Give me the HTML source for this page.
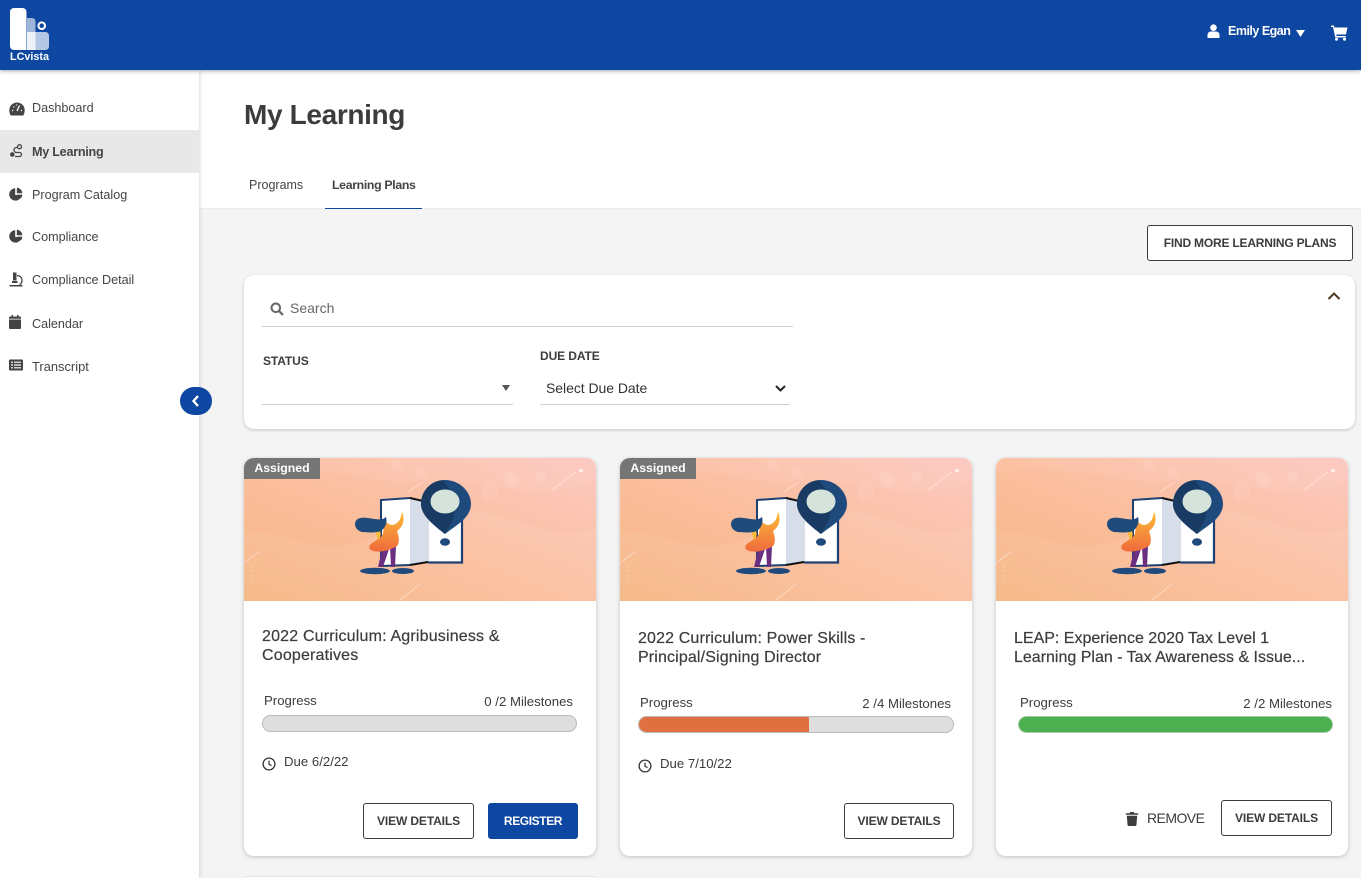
<!DOCTYPE html>
<html lang="en"><head><meta charset="utf-8"><title>My Learning</title>
<style>
*{box-sizing:border-box}
html,body{margin:0;padding:0;width:1361px;height:878px;overflow:hidden}
body{position:relative;background:#f4f4f4;font-family:"Liberation Sans",sans-serif;color:#3c3c3c}
.a{position:absolute;white-space:nowrap}
#hdr{left:0;top:0;width:1361px;height:70px;background:#0d47a1;box-shadow:0 1px 4px rgba(0,0,0,.35);z-index:5}
#side{left:0;top:70px;width:199px;height:808px;background:#fff;box-shadow:1px 0 4px rgba(0,0,0,.14);z-index:3}
#top{left:199px;top:70px;width:1162px;height:139px;background:#fff;border-bottom:1px solid #eee}
.nav{left:32px;font-size:12.6px;line-height:16px;color:#444}
.card{width:352px;height:398px;top:458px;background:#fff;border-radius:10px;box-shadow:0 1px 4px rgba(0,0,0,.22);overflow:hidden}
.btn{border:1px solid #3c3c3c;border-radius:3px;background:#fff;font-size:12px;font-weight:bold;color:#3c3c3c;display:flex;align-items:center;justify-content:center;letter-spacing:-.12px}
.title{font-size:16px;line-height:19px;color:#3c3c3c;font-weight:400;letter-spacing:.18px;-webkit-text-stroke:.2px #3c3c3c}
.sm{font-size:13.2px;line-height:15px;color:#3c3c3c}
.bar{height:17px;border-radius:9px;background:#dedede;border:1px solid #bbb;overflow:hidden}
.tag{left:0;top:0;width:76px;height:21px;background:#757575;color:#fff;font-size:12.3px;font-weight:bold;text-align:center;line-height:20px}
</style></head><body>
<svg width="0" height="0" style="position:absolute">
<defs>
<linearGradient id="g" x1="0" y1="1" x2="1" y2="0"><stop offset="0" stop-color="#f6b581"/><stop offset=".5" stop-color="#fbbf9f"/><stop offset="1" stop-color="#fcc8c0"/></linearGradient>
<linearGradient id="f" x1="0" y1="0" x2="0" y2="1"><stop offset="0" stop-color="#fbbb38"/><stop offset="1" stop-color="#ef6a3c"/></linearGradient>
</defs>
<symbol id="art" viewBox="0 0 352 143">
<rect width="352" height="143" fill="url(#g)"/>
<path d="M0 75C40 72 60 92 100 88S170 50 220 52 300 85 352 70V143H0Z" fill="#fff" opacity=".07"/>
<path d="M0 16C70 0 130 30 190 24S290 50 352 22V0H0Z" fill="#fff" opacity=".06"/>
<circle cx="267" cy="22" r="8" fill="#fff" opacity=".12"/><circle cx="246" cy="34" r="9" fill="#fff" opacity=".08"/><circle cx="297" cy="19" r="5" fill="#fff" opacity=".1"/><circle cx="177" cy="15" r="6" fill="#fff" opacity=".08"/><circle cx="153" cy="7" r="6" fill="#fff" opacity=".08"/>
<path d="M308 32 332 14M0 105 15 94M155 143 176 126M163 35 177 25" stroke="#fff" stroke-width="1" opacity=".4"/>
<rect x="335" y="11" width="4" height="3" fill="#fff" opacity=".6"/>
<path d="M8 109v1M8 113v1M8 117v1M8 121v1M8 124v1" stroke="#fff" stroke-width="2" opacity=".3"/>
<g style="filter:blur(.3px)">
<path d="M137 42 166 40V107L137 108Z" fill="#fff"/>
<path d="M166 40 185 45V105L166 107Z" fill="#d7deea"/>
<path d="M185 45H218V105H185Z" fill="#fff"/>
<path d="M137 108V42L166 40" fill="none" stroke="#1e4070" stroke-width="2"/>
<path d="M137 108 166 107" fill="none" stroke="#1e4070" stroke-width="2"/>
<path d="M166 40 179 43M166 107 184 104" stroke="#111" stroke-width="2" fill="none"/>
<path d="M184 104.500H218V60" stroke="#1e4070" stroke-width="2.200" fill="none"/>
<path d="M201 22C187 22 177 33 177 46 177 58 191 68 201 76 211 68 227 60 227 46 227 33 215 22 201 22Z" fill="#1f4a7c"/>
<path d="M201 22C187 22 177 33 177 46 177 58 191 68 201 76L206 68C213 58 212 34 198 22Z" fill="#193a63"/>
<ellipse cx="201" cy="43.500" rx="14.500" ry="12" fill="#d5e3da"/>
<ellipse cx="201" cy="84" rx="5" ry="3.800" fill="#1f4a7c"/>
<ellipse cx="131" cy="113" rx="15" ry="3.200" fill="#1f4a7c"/><ellipse cx="159" cy="113" rx="11" ry="3" fill="#1f4a7c"/>
<path d="M139 88H146L139 109H134ZM146 88H152L151 109H147Z" fill="#6b2f80"/>
<path d="M131 72C132 76 133 80 134 83L137 76 135 71Z" fill="#fbbb38"/>
<path d="M141 63C146 68 150 68 154 64 157 61 157 57 158 54 161 60 160 68 153 73 155 79 156 84 153 88 147 92 134 96 127 92 124 90 125 87 128 85 133 82 138 79 139 75 140 71 139 67 141 63Z" fill="url(#f)"/>
<path d="M111 66C111 60 118 59 124 60 131 61 138 63 142 59 144 66 140 73 133 74 127 75 122 74 118 74 114 73 111 70 111 66Z" fill="#1f4a7c"/>
</g>
</symbol>
<symbol id="clock" viewBox="0 0 14 14"><circle cx="7" cy="7" r="5.900" fill="none" stroke="#333" stroke-width="1.300"/><path d="M7 3.600V7.400L9.600 8.600" fill="none" stroke="#333" stroke-width="1.200"/></symbol>
<symbol id="pie" viewBox="0 0 14 14"><path d="M6.200 1.200A6.200 6.200 0 1 0 12.600 8H6.200Z" fill="#444"/><path d="M7.800 0.600A6 6 0 0 1 13.400 6.200H7.800Z" fill="#444"/><path d="M8.400 7.600H13.400A6 6 0 0 1 11.800 11.500Z" fill="#444"/></symbol>
</svg>

<div id="hdr" class="a">
<svg class="a" style="left:0;top:0" width="60" height="56" viewBox="0 0 60 56">
<path d="M27 18H32A3.500 3.500 0 0 1 35.500 21.500V32H27Z" fill="#fff" opacity=".6"/>
<path d="M35.500 32H45.500A3.500 3.500 0 0 1 49 35.500V46.500A3.500 3.500 0 0 1 45.500 50H35.500Z" fill="#fff" opacity=".7"/>
<path d="M27 32H35.500V50H27Z" fill="#fff" opacity=".93"/>
<path d="M14 8H22.500A4 4 0 0 1 26.500 12V50H14A4 4 0 0 1 10 46V12A4 4 0 0 1 14 8Z" fill="#fff"/>
<circle cx="41.700" cy="25.700" r="3.300" fill="none" stroke="#fff" stroke-width="2"/>
</svg>
<div class="a" style="left:10px;top:51px;font-size:10.800px;font-weight:bold;color:#fff;line-height:13px">LCvista</div>
<svg class="a" style="left:1207px;top:24px" width="13" height="14" viewBox="0 0 13 14"><circle cx="6.500" cy="3.700" r="3.300" fill="#fff"/><path d="M0.500 14V11C.5 8.500 2.500 7.500 4 7.500H9C10.500 7.500 12.500 8.500 12.500 11V14Z" fill="#fff"/></svg>
<div class="a" style="left:1228px;top:23px;font-size:12.500px;font-weight:bold;color:#fff;line-height:16px;letter-spacing:-.5px">Emily Egan</div>
<svg class="a" style="left:1296px;top:30px" width="9" height="7" viewBox="0 0 9 7"><path d="M0 0H9L4.500 7Z" fill="#fff"/></svg>
<svg class="a" style="left:1331px;top:25px" width="17" height="16" viewBox="0 0 17 16"><path d="M0 .5H3L3.500 2.500H16.500L15 9.500H5.300L5.600 11H14.800V12.500H4.300L2 2H0Z" fill="#fff"/><circle cx="5.500" cy="14.300" r="1.500" fill="#fff"/><circle cx="13.500" cy="14.300" r="1.500" fill="#fff"/></svg>
</div>

<div id="side" class="a"></div>
<div class="a" style="left:0;top:130px;width:199px;height:43px;background:#e8e8e8;z-index:3"></div>
<div style="position:absolute;left:0;top:0;z-index:4">
<svg class="a" style="left:9px;top:102px" width="16" height="14" viewBox="0 0 16 14"><path d="M8 .5A7.700 7.700 0 0 0 .3 8.200C.3 10.500 1 12.500 1.800 13.500H14.200C15 12.500 15.700 10.500 15.700 8.200A7.700 7.700 0 0 0 8 .5Z" fill="#444"/><path d="M8 9 10.500 3.500M3 8.500H4.200M11.800 8.500H13M4.500 4.500 5.300 5.300M7.500 2.500V3.500" stroke="#fff" stroke-width="1.300"/></svg>
<div class="a nav" style="top:100px">Dashboard</div>
<svg class="a" style="left:9px;top:144px" width="15" height="15" viewBox="0 0 15 15"><circle cx="3.300" cy="10.500" r="2.300" fill="#444"/><circle cx="10.500" cy="2.700" r="2" fill="none" stroke="#444" stroke-width="1.300"/><path d="M8 3.500H7.500A2.500 2.500 0 0 0 7.500 8.500H10.500A1.800 1.800 0 0 1 10.500 12.500H6" fill="none" stroke="#444" stroke-width="1.300"/></svg>
<div class="a nav" style="top:144px;font-weight:bold;letter-spacing:-.25px">My Learning</div>
<svg class="a" style="left:9px;top:187px" width="14" height="14"><use href="#pie"/></svg>
<div class="a nav" style="top:187px">Program Catalog</div>
<svg class="a" style="left:9px;top:229px" width="14" height="14"><use href="#pie"/></svg>
<div class="a nav" style="top:229px">Compliance</div>
<svg class="a" style="left:9px;top:272px" width="14" height="15" viewBox="0 0 14 15"><path d="M4 0.500H7.500V8.500H4Z" fill="#444"/><path d="M3 9H8.500V11H3Z" fill="#444"/><path d="M8 3.500C11 3.500 13 5.700 13 8.500 13 10.500 12 12 10.500 12.500" fill="none" stroke="#444" stroke-width="1.300"/><path d="M0.500 13H13.500V14.500H0.500Z" fill="#444"/></svg>
<div class="a nav" style="top:272px">Compliance Detail</div>
<svg class="a" style="left:9px;top:315px" width="12" height="14" viewBox="0 0 12 14"><path d="M0 4.500H12V13A1 1 0 0 1 11 14H1A1 1 0 0 1 0 13ZM1 1.500H2.500V0H4V1.500H8V0H9.500V1.500H11A1 1 0 0 1 12 2.500V3.700H0V2.500A1 1 0 0 1 1 1.500Z" fill="#444"/></svg>
<div class="a nav" style="top:316px">Calendar</div>
<svg class="a" style="left:9px;top:359px" width="14" height="12" viewBox="0 0 14 12"><path d="M1 .5H13A1 1 0 0 1 14 1.500V10.500A1 1 0 0 1 13 11.500H1A1 1 0 0 1 0 10.500V1.500A1 1 0 0 1 1 .5Z" fill="#444"/><path d="M2 3.200H4M5 3.200H12M2 6H4M5 6H12M2 8.800H4M5 8.800H12" stroke="#fff" stroke-width="1.200"/></svg>
<div class="a nav" style="top:359px;font-size:12.900px">Transcript</div>
<div class="a" style="left:180px;top:387px;width:32px;height:28px;border-radius:14px;background:#0d47a1"></div>
<svg class="a" style="left:191px;top:394px" width="9" height="14" viewBox="0 0 9 14"><path d="M7 2 2.500 7 7 12" fill="none" stroke="#fff" stroke-width="2.400"/></svg>
</div>

<div id="top" class="a"></div>
<div class="a" style="left:244px;top:97px;font-size:28px;font-weight:bold;line-height:36px;color:#3c3c3c;letter-spacing:-.35px">My Learning</div>
<div class="a" style="left:249px;top:177px;font-size:12.500px;line-height:16px;color:#444">Programs</div>
<div class="a" style="left:332px;top:177px;font-size:12.300px;line-height:16px;font-weight:bold;color:#444;letter-spacing:-.33px">Learning Plans</div>
<div class="a" style="left:325px;top:208px;width:97px;height:1px;background:#0d47a1"></div>

<div class="a btn" style="left:1147px;top:225px;width:206px;height:36px;letter-spacing:-.2px">FIND MORE LEARNING PLANS</div>

<div class="a" style="left:244px;top:275px;width:1111px;height:154px;background:#fff;border-radius:10px;box-shadow:0 1px 3px rgba(0,0,0,.2)"></div>
<svg class="a" style="left:270px;top:302px" width="14" height="14" viewBox="0 0 14 14"><circle cx="5.800" cy="5.800" r="4.300" fill="none" stroke="#666" stroke-width="2"/><path d="M9 9 13 13" stroke="#666" stroke-width="2.200"/></svg>
<div class="a" style="left:290px;top:300px;font-size:14px;line-height:16px;color:#666">Search</div>
<div class="a" style="left:262px;top:326px;width:531px;height:1px;background:#ccd0d5"></div>
<div class="a" style="left:263px;top:354px;font-size:12px;font-weight:bold;line-height:15px;letter-spacing:-.1px">STATUS</div>
<svg class="a" style="left:502px;top:385px" width="8" height="6" viewBox="0 0 8 6"><path d="M0 0H8L4 6Z" fill="#555"/></svg>
<div class="a" style="left:262px;top:404px;width:251px;height:1px;background:#ccd0d5"></div>
<div class="a" style="left:540px;top:349px;font-size:12px;font-weight:bold;line-height:15px;letter-spacing:-.1px">DUE DATE</div>
<div class="a" style="left:546px;top:380px;font-size:14px;line-height:16px;color:#333;letter-spacing:-.05px">Select Due Date</div>
<svg class="a" style="left:775px;top:385px" width="11" height="7" viewBox="0 0 11 7"><path d="M1 1 5.500 5.500 10 1" fill="none" stroke="#222" stroke-width="2"/></svg>
<div class="a" style="left:540px;top:404px;width:250px;height:1px;background:#ccd0d5"></div>
<svg class="a" style="left:1327px;top:291px" width="14" height="10" viewBox="0 0 14 10"><path d="M1.500 8 7 2.500 12.500 8" fill="none" stroke="#4a3a20" stroke-width="2"/></svg>

<div class="a card" style="left:244px">
<svg class="a" style="left:0;top:0" width="352" height="143"><use href="#art"/></svg>
<div class="a tag">Assigned</div>
<div class="a title" style="left:18px;top:169px">2022 Curriculum: Agribusiness &amp;<br>Cooperatives</div>
<div class="a sm" style="left:20px;top:235px">Progress</div>
<div class="a sm" style="right:23px;top:236px">0 /2 Milestones</div>
<div class="a bar" style="left:18px;top:257px;width:315px"></div>
<svg class="a" style="left:18px;top:299px" width="14" height="14"><use href="#clock"/></svg>
<div class="a sm" style="left:40px;top:296px">Due 6/2/22</div>
<div class="a btn" style="left:119px;top:345px;width:111px;height:36px">VIEW DETAILS</div>
<div class="a btn" style="left:244px;top:345px;width:90px;height:36px;background:#0d47a1;border-color:#0d47a1;color:#fff;letter-spacing:-.4px">REGISTER</div>
</div>

<div class="a card" style="left:620px">
<svg class="a" style="left:0;top:0" width="352" height="143"><use href="#art"/></svg>
<div class="a tag">Assigned</div>
<div class="a title" style="left:18px;top:171px;letter-spacing:.14px">2022 Curriculum: Power Skills -<br>Principal/Signing Director</div>
<div class="a sm" style="left:20px;top:237px">Progress</div>
<div class="a sm" style="right:21px;top:238px">2 /4 Milestones</div>
<div class="a bar" style="left:18px;top:258px;width:316px"><div style="width:170px;height:100%;background:#e07040"></div></div>
<svg class="a" style="left:18px;top:301px" width="14" height="14"><use href="#clock"/></svg>
<div class="a sm" style="left:40px;top:298px">Due 7/10/22</div>
<div class="a btn" style="left:224px;top:345px;width:110px;height:36px">VIEW DETAILS</div>
</div>

<div class="a card" style="left:996px">
<svg class="a" style="left:0;top:0" width="352" height="143"><use href="#art"/></svg>
<div class="a title" style="left:18px;top:171px;letter-spacing:0">LEAP: Experience 2020 Tax Level 1<br>Learning Plan - Tax Awareness &amp; Issue...</div>
<div class="a sm" style="left:24px;top:237px">Progress</div>
<div class="a sm" style="right:16px;top:238px">2 /2 Milestones</div>
<div class="a bar" style="left:22px;top:258px;width:315px;background:#4caf50;border-color:#a5c9a7"></div>
<svg class="a" style="left:129px;top:353px" width="14" height="15" viewBox="0 0 14 15"><path d="M.8 2.200H4.500L5.300 1H8.700L9.500 2.200H13.200V3.800H.8ZM1.800 4.800H12.200L11.400 14.300A.8.800 0 0 1 10.600 15H3.400A.8.800 0 0 1 2.600 14.300Z" fill="#3c3c3c"/></svg>
<div class="a" style="left:151px;top:352px;font-size:14px;line-height:16px;color:#3c3c3c;letter-spacing:-.55px">REMOVE</div>
<div class="a btn" style="left:225px;top:342px;width:111px;height:36px">VIEW DETAILS</div>
</div>

<div class="a" style="left:244px;top:877px;width:352px;height:3px;background:#fff;border-radius:8px 8px 0 0;box-shadow:0 0 2px rgba(0,0,0,.2)"></div>
</body></html>
